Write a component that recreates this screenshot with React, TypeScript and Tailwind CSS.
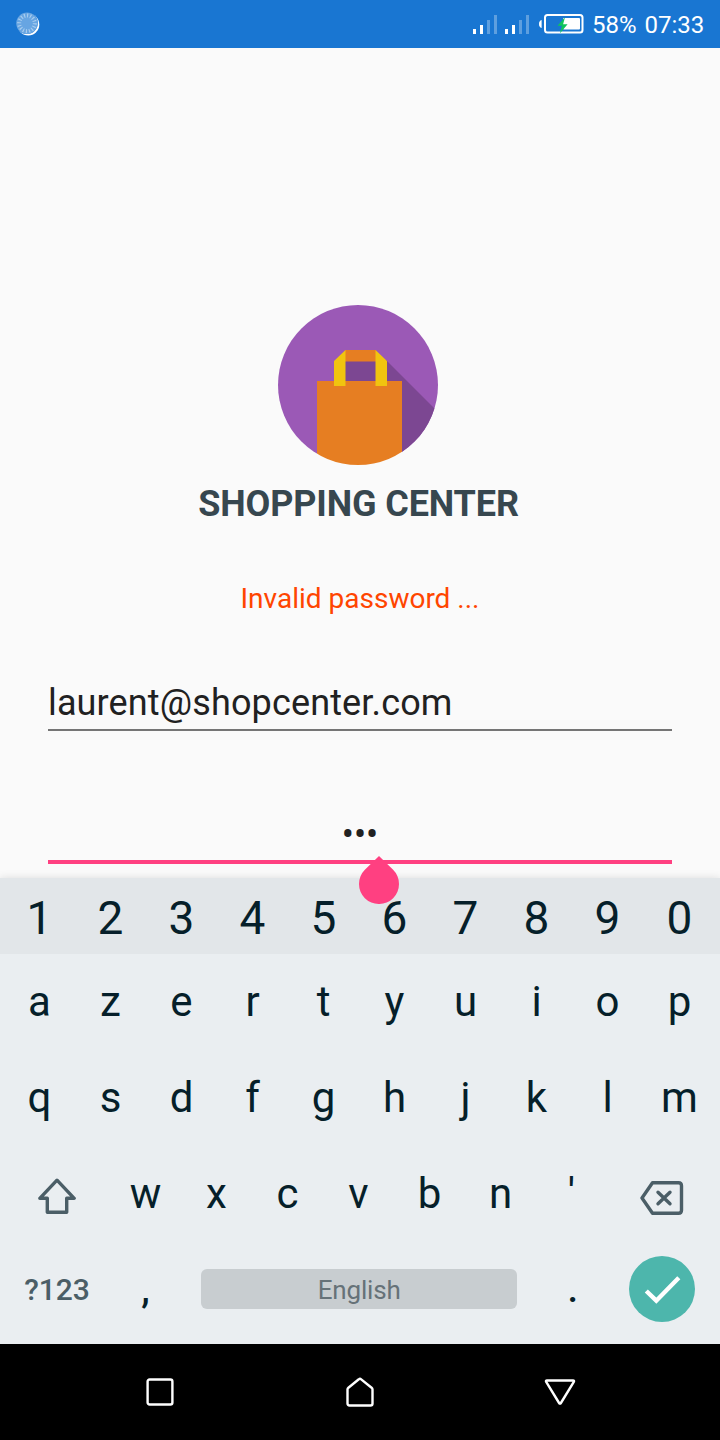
import React from "react";

const DIGITS = ["1", "2", "3", "4", "5", "6", "7", "8", "9", "0"];
const ROW_ONE = ["a", "z", "e", "r", "t", "y", "u", "i", "o", "p"];
const ROW_TWO = ["q", "s", "d", "f", "g", "h", "j", "k", "l", "m"];
const ROW_THREE = ["w", "x", "c", "v", "b", "n", "'"];

function Signal() {
  return (
    <svg width="25" height="20" viewBox="0 0 25 20" fill="#fff">
      <rect x="0" y="14" width="3" height="5" />
      <rect x="7" y="10" width="3" height="9" />
      <rect x="14" y="5" width="3" height="14" opacity="0.3" />
      <rect x="21" y="0" width="3" height="19" opacity="0.3" />
    </svg>
  );
}

function StatusBar() {
  return (
    <header className="flex h-12 items-center bg-[#1976d2] pr-[15px] pl-4 text-white">
      <svg width="24" height="24" viewBox="0 0 24 24">
        <circle cx="12.3" cy="12.5" r="11" fill="#fff" />
        <circle cx="10.8" cy="11" r="11" fill="#1976d2" />
        <circle cx="11" cy="11.3" r="10.8" fill="#67a5e2" />
        <circle cx="11" cy="11.3" r="7.8" fill="none" stroke="#a9cdef" strokeWidth="4" strokeDasharray="1.1 1.95" />
      </svg>
      <div className="ml-auto flex items-center">
        <div className="mt-0.5 flex gap-[7px]">
          <Signal />
          <Signal />
        </div>
        <svg className="ml-[9px]" width="46" height="20" viewBox="0 0 46 20">
          <path d="M2.6 6v8C.8 13.500 0 12 0 10S.8 6.500 2.600 6z" fill="#fff" />
          <rect x="6" y="1" width="37.5" height="17.5" rx="2.5" fill="none" stroke="#fff" strokeWidth="2" />
          <rect x="24" y="4" width="17" height="11.5" rx="1" fill="#fff" />
          <path d="M26 3.2l-7.5 8.600h4.400l-1.900 7.400 7.600-9h-4.500z" fill="#0fc45c" />
        </svg>
        <span className="ml-[7px] h-12 w-[113px] text-[24px] leading-[50px] [word-spacing:2px] whitespace-pre">58% 07:33</span>
      </div>
    </header>
  );
}

function Logo() {
  return (
    <svg width="160" height="160" viewBox="0 0 160 160" className="mr-1">
      <defs>
        <clipPath id="disc">
          <circle cx="80" cy="80" r="80" />
        </clipPath>
      </defs>
      <g clipPath="url(#disc)">
        <path d="M0 0H160V160H124V76H39V160H0z" fill="#9b59b6" />
        <path d="M67 55h41l55 55v50H124V77H67z" fill="#7c4792" />
        <rect x="39" y="76" width="85" height="84" fill="#e67e22" />
        <rect x="67" y="45" width="31" height="11.5" fill="#e67e22" />
        <path d="M67.5 45v36H56V56zM97.5 45v36H109V56z" fill="#f1c40f" />
      </g>
    </svg>
  );
}

function LetterRow({ keys }: { keys: string[] }) {
  return (
    <div className="grid h-24 grid-cols-[repeat(9,71px)_73px] pl-[4px] text-center text-[42px] leading-[96px]">
      {keys.map((k) => (
        <span key={k}>{k}</span>
      ))}
    </div>
  );
}

function Keyboard() {
  return (
    <section className="h-[466px] bg-[#eaeef1] text-[#061f2a] shadow-[0_0_8px_rgba(0,0,0,0.12)]">
      <div className="grid h-[76px] grid-cols-[repeat(9,71px)_73px] bg-[#e2e6e9] pl-[4px] text-center text-[46px] leading-[80px]">
        {DIGITS.map((k) => (
          <span key={k}>{k}</span>
        ))}
      </div>
      <LetterRow keys={ROW_ONE} />
      <LetterRow keys={ROW_TWO} />
      <div className="flex h-24 px-1 text-center text-[42px] leading-[96px]">
        <div className="flex w-[106px] items-center justify-center pt-1.5">
          <svg width="40" height="38" viewBox="0 0 40 38" fill="none" stroke="#4b5e67" strokeWidth="3.4" strokeLinejoin="round">
            <path d="M20 2.2L37.2 20.300H29.700V34.200H10.300V20.300H2.800z" />
          </svg>
        </div>
        {ROW_THREE.map((k) => (
          <span key={k} className="w-[71px]">{k}</span>
        ))}
        <div className="flex flex-1 items-center justify-center pt-[7px] pl-px">
          <svg width="44" height="36" viewBox="0 0 44 36" fill="none" stroke="#4b5e67" strokeWidth="3.4" strokeLinejoin="round" strokeLinecap="round">
            <path d="M12.5 2.700H38.500Q41.500 2.700 41.500 5.700V30.300Q41.500 33.300 38.500 33.300H12.500L2 18z" />
            <path d="M18 12.200l12 11.600M30 12.200l-12 11.600" />
          </svg>
        </div>
      </div>
      <div className="flex h-[94px] items-center px-1 text-center">
        <span className="w-[106px] pt-0.5 text-[30px] leading-[92px] font-medium text-[#4b5e67]">?123</span>
        <span className="w-[71.2px] text-[38px] leading-[90px] font-medium">,</span>
        <div className="mx-[20px] h-10 w-[316px] rounded-[6px] bg-[#c8cdd0] text-[26px] leading-[42px] tracking-[-0.15px] text-[#667278]">English</div>
        <span className="w-[71.2px] text-[38px] leading-[90px] font-medium">.</span>
        <div className="flex flex-1 items-center justify-center">
          <svg width="66" height="66" viewBox="0 0 66 66">
            <circle cx="33" cy="33" r="33" fill="#4db6ac" />
            <path d="M17.3 35L27.300 44.700 49.800 21.800" fill="none" stroke="#fff" strokeWidth="4.4" />
          </svg>
        </div>
      </div>
    </section>
  );
}

function NavBar() {
  return (
    <nav className="flex h-24 items-center justify-between bg-black px-[144px]">
      <svg width="32" height="32" viewBox="0 0 32 32" fill="none" stroke="#fff" strokeWidth="2.4" strokeLinejoin="round">
        <rect x="3.6" y="3.5" width="24.8" height="25" rx="2" />
      </svg>
      <svg width="32" height="32" viewBox="0 0 32 32" fill="none" stroke="#fff" strokeWidth="2.4" strokeLinejoin="round">
        <path d="M14.8 3.300Q16 2.300 17.200 3.300L27.600 11.700Q28.500 12.500 28.500 13.600V27.500Q28.500 29.500 26.500 29.500H5.500Q3.500 29.500 3.500 27.500V13.600Q3.500 12.500 4.400 11.700z" />
      </svg>
      <svg width="32" height="32" viewBox="0 0 32 32" fill="none" stroke="#fff" strokeWidth="2.4" strokeLinejoin="round">
        <path d="M3 4.500H29Q30.600 4.500 29.800 5.900L16.900 27Q16 28.300 15.100 27L2.200 5.900Q1.400 4.500 3 4.500z" />
      </svg>
    </nav>
  );
}

export default function App() {
  return (
    <div className="flex h-[1440px] w-[720px] flex-col overflow-hidden bg-[#fafafa] font-[Roboto,sans-serif]">
      <StatusBar />
      <main className="relative flex h-[830px] flex-col items-center px-12 pt-[257px]">
        <Logo />
        <h1 className="mt-[17px] mr-[3px] text-[36px] leading-[44px] font-bold tracking-[-0.12px] text-[#37474f]">SHOPPING CENTER</h1>
        <p className="mt-[53px] text-[28px] leading-[40px] text-[#ff4500]">Invalid password ...</p>
        <div className="mt-[58px] h-[54px] w-full border-b-2 border-[#757575] text-[36px] leading-[52px] tracking-[0.14px] text-[#212121]">
          laurent@shopcenter.com
        </div>
        <div className="mt-[76px] h-[57px] w-full border-b-4 border-[#ff4081] text-center text-[36px] leading-[56px] text-[#212121]">
          •••
        </div>
        <svg className="absolute top-[808px] left-[359px] z-10" width="40" height="48" viewBox="0 0 40 48" fill="#ff4081">
          <path d="M20 0L34.14 13.860A20 20 0 1 1 5.860 13.860z" />
        </svg>
      </main>
      <Keyboard />
      <NavBar />
    </div>
  );
}
